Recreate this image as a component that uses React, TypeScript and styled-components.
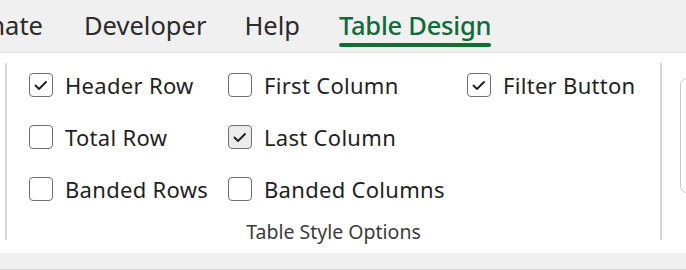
import React from "react";
import styled, { createGlobalStyle } from "styled-components";

const Global = createGlobalStyle`
  html, body { margin: 0; padding: 0; background: #ffffff; }
  body { font-family: "Noto Sans", "Open Sans", sans-serif; overflow: hidden; }
`;

const Page = styled.div`
  width: 686px;
  height: 270px;
  display: flex;
  flex-direction: column;
  overflow: hidden;
`;

const TabBar = styled.div`
  height: 52px;
  background: #f0f0f0;
  border-bottom: 1px solid #e1e1e1;
  display: flex;
  align-items: flex-start;
  overflow: hidden;
  flex-shrink: 0;
`;

const ClippedTab = styled.div`
  width: 43px;
  display: flex;
  justify-content: flex-end;
  overflow: hidden;
  flex-shrink: 0;
`;

const Tab = styled.div<{ $active?: boolean; $gap?: number }>`
  position: relative;
  margin-left: ${(p) => (p.$gap ? `${p.$gap}px` : "0")};
  padding-top: 8px;
  font-size: 25.5px;
  line-height: 34px;
  white-space: nowrap;
  color: ${(p) => (p.$active ? "#0f6b38" : "#2b2b2b")};
  font-weight: ${(p) => (p.$active ? 500 : 400)};
  letter-spacing: ${(p) => (p.$active ? "-0.25px" : "0")};
`;

const Underline = styled.div`
  position: absolute;
  left: 0;
  right: 0;
  top: 43px;
  height: 4px;
  border-radius: 2px;
  background: #107034;
`;

const Panel = styled.div`
  height: 199px;
  background: #ffffff;
  display: flex;
  align-items: flex-start;
  flex-shrink: 0;
`;

const Divider = styled.div<{ $ml: number }>`
  width: 2px;
  height: 177px;
  margin-top: 10px;
  margin-left: ${(p) => p.$ml}px;
  background: #d6d6d6;
  flex-shrink: 0;
`;

const Group = styled.div`
  width: 653px;
  flex-shrink: 0;
  padding-top: 6px;
  display: flex;
  flex-direction: column;
`;

const Grid = styled.div`
  display: grid;
  grid-template-columns: 199px 239px 1fr;
  grid-auto-rows: 52px;
  padding-left: 22px;
`;

const Option = styled.label`
  display: flex;
  align-items: center;
  gap: 12px;
  font-size: 22px;
  letter-spacing: 0.3px;
  color: #1f1f1f;
  white-space: nowrap;
`;

const Box = styled.span<{ $filled?: boolean }>`
  width: 24px;
  height: 24px;
  box-sizing: border-box;
  border: 1.6px solid #6e6e6e;
  border-radius: 4px;
  background: ${(p) => (p.$filled ? "#ececec" : "#ffffff")};
  display: flex;
  align-items: center;
  justify-content: center;
  flex-shrink: 0;
`;

const Empty = styled.div``;

const GroupLabel = styled.div`
  text-align: center;
  font-size: 19.5px;
  line-height: 24px;
  margin-top: 5px;
  color: #3b3b3b;
`;

const GalleryBox = styled.div`
  margin-top: 25px;
  margin-left: 18px;
  width: 60px;
  height: 115px;
  box-sizing: border-box;
  border: 1.5px solid #c9c9c9;
  border-radius: 7px;
  flex-shrink: 0;
`;

const BottomStrip = styled.div`
  height: 16px;
  background: #efefef;
  border-bottom: 1px solid #d6d6d6;
  margin-top: 1px;
  flex-shrink: 0;
`;

const Check = () => (
  <svg width="20" height="20" viewBox="0 0 20 20">
    <polyline
      points="4.5,10.5 8,14 15,7"
      fill="none"
      stroke="#1b1b1b"
      strokeWidth="1.8"
      strokeLinecap="round"
      strokeLinejoin="round"
    />
  </svg>
);

type Opt = { label: string; checked: boolean; filled?: boolean } | null;

const options: Opt[] = [
  { label: "Header Row", checked: true },
  { label: "First Column", checked: false },
  { label: "Filter Button", checked: true },
  { label: "Total Row", checked: false },
  { label: "Last Column", checked: true, filled: true },
  null,
  { label: "Banded Rows", checked: false },
  { label: "Banded Columns", checked: false },
  null,
];

export default function App() {
  return (
    <Page>
      <Global />
      <TabBar>
        <ClippedTab>
          <Tab>Automate</Tab>
        </ClippedTab>
        <Tab $gap={41}>Developer</Tab>
        <Tab $gap={38}>Help</Tab>
        <Tab $gap={39} $active>
          Table Design
          <Underline />
        </Tab>
      </TabBar>
      <Panel>
        <Divider $ml={5} />
        <Group>
          <Grid>
            {options.map((o, i) =>
              o ? (
                <Option key={i}>
                  <Box $filled={o.filled}>{o.checked && <Check />}</Box>
                  {o.label}
                </Option>
              ) : (
                <Empty key={i} />
              )
            )}
          </Grid>
          <GroupLabel>Table Style Options</GroupLabel>
        </Group>
        <Divider $ml={0} />
        <GalleryBox />
      </Panel>
      <BottomStrip />
    </Page>
  );
}
